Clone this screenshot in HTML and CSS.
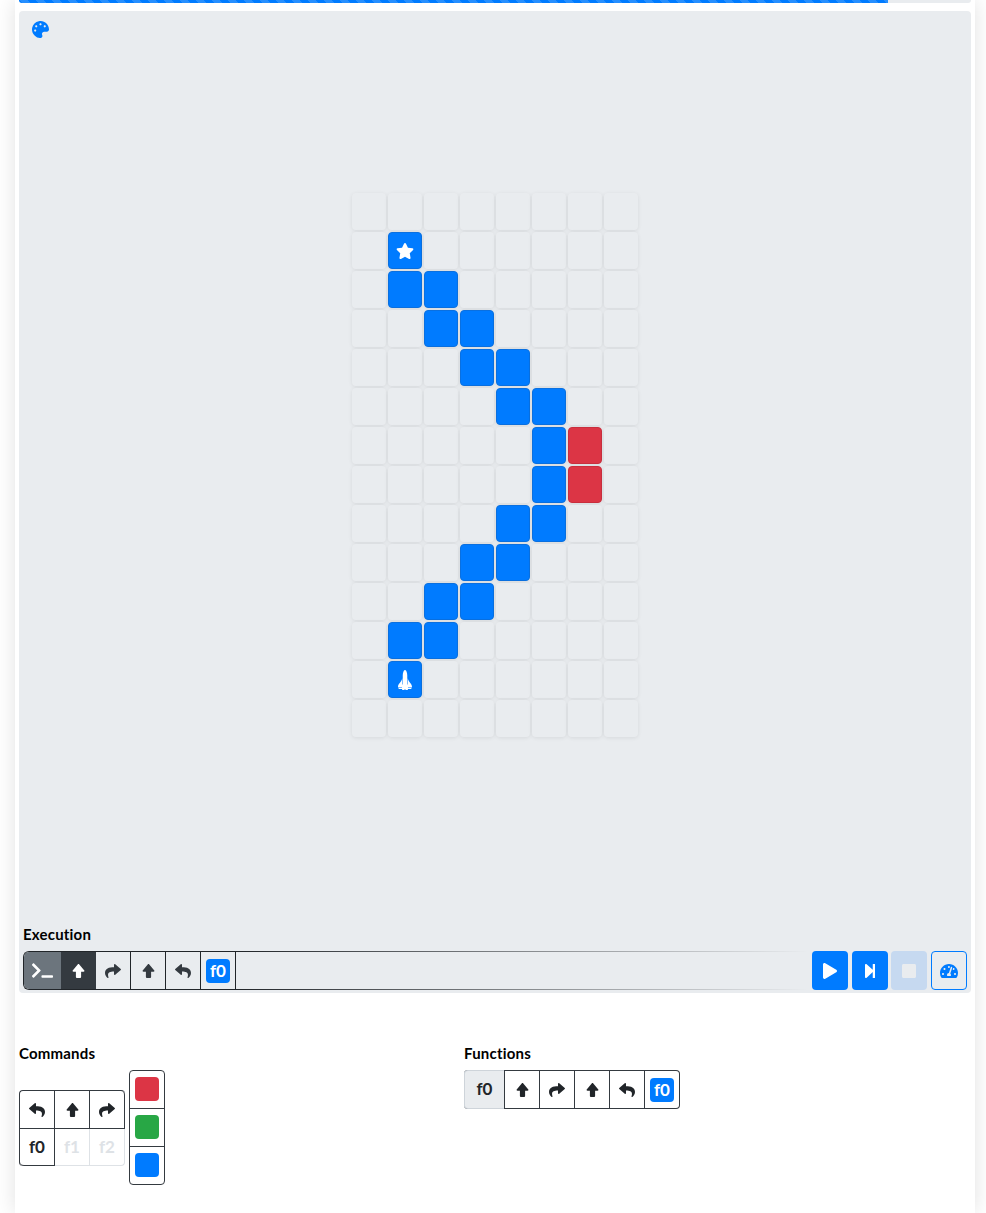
FILE: index.html
```html
<!DOCTYPE html>
<html lang="en">
<head>
    <meta charset="UTF-8">
    <meta name="viewport" content="width=device-width, initial-scale=1.0">
    <title>Robot Puzzle</title>
    <link rel="stylesheet" href="styles.css">
</head>
<body>
  <svg class="icon-defs" aria-hidden="true">
    <symbol id="i-palette" viewBox="0 0 512 512"><path d="M204.3 5C104.9 24.4 24.8 104.3 5.2 203.4c-37 187 131.7 326.4 258.8 306.7 41.2-6.4 61.4-54.6 42.5-91.7-23.1-45.4 9.9-98.4 60.9-98.4h79.7c35.8 0 64.8-29.6 64.9-65.3C511.5 97.1 368.1-26.9 204.3 5zM96 320c-17.7 0-32-14.3-32-32s14.3-32 32-32 32 14.3 32 32-14.3 32-32 32zm32-128c-17.7 0-32-14.3-32-32s14.3-32 32-32 32 14.3 32 32-14.3 32-32 32zm128-64c-17.7 0-32-14.3-32-32s14.3-32 32-32 32 14.3 32 32-14.3 32-32 32zm128 64c-17.7 0-32-14.3-32-32s14.3-32 32-32 32 14.3 32 32-14.3 32-32 32z"/></symbol>
    <symbol id="i-star" viewBox="0 0 576 512"><path d="M259.3 17.8L194 150.2 47.9 171.5c-26.2 3.8-36.7 36.1-17.7 54.6l105.7 103-25 145.5c-4.5 26.3 23.2 46 46.4 33.7L288 439.6l130.7 68.7c23.2 12.2 50.9-7.4 46.4-33.7l-25-145.5 105.7-103c19-18.5 8.5-50.8-17.7-54.6L382 150.2 316.7 17.8c-11.7-23.6-45.6-23.9-57.4 0z"/></symbol>
    <symbol id="i-shuttle" viewBox="0 0 640 640"><path transform="rotate(-90 320 320) translate(0 64)" d="M592.604 208.244C559.735 192.836 515.777 184 472 184H186.327c-4.952-6.555-10.585-11.978-16.72-16H376C229.157 137.747 219.403 32 96.003 32H96v128H80V32c-26.51 0-48 28.654-48 64v64c-23.197 0-32 10.032-32 24v40c0 13.983 8.819 24 32 24v16c-23.197 0-32 10.032-32 24v40c0 13.983 8.819 24 32 24v64c0 35.346 21.49 64 48 64V352h16v128h.003c123.4 0 133.154-105.747 279.997-136H169.606c6.135-4.022 11.768-9.445 16.72-16H472c43.777 0 87.735-8.836 120.604-24.244C622.282 289.845 640 271.992 640 256s-17.718-33.845-47.396-47.756z"/></symbol>
    <symbol id="i-up" viewBox="0 0 12 14"><path d="M5.2.4a1 1 0 0 1 1.6 0l5 6A.9.9 0 0 1 11 7.8H8.6V13a1 1 0 0 1-1 1H4.4a1 1 0 0 1-1-1V7.8H1A.9.9 0 0 1 .2 6.4z"/></symbol>
    <symbol id="i-right" viewBox="0 0 512 512"><path d="M503.691 189.836L327.687 37.851C312.281 24.546 288 35.347 288 56.015v80.053C127.371 137.907 0 170.1 0 322.326c0 61.441 39.581 122.309 83.333 154.132 13.653 9.931 33.111-2.533 28.077-18.631C66.066 312.814 132.917 274.316 288 272.085V360c0 20.7 24.3 31.453 39.687 18.164l176.004-152c11.071-9.562 11.086-26.753 0-36.328z"/></symbol>
    <symbol id="i-left" viewBox="0 0 512 512"><path transform="matrix(-1 0 0 1 512 0)" d="M503.691 189.836L327.687 37.851C312.281 24.546 288 35.347 288 56.015v80.053C127.371 137.907 0 170.1 0 322.326c0 61.441 39.581 122.309 83.333 154.132 13.653 9.931 33.111-2.533 28.077-18.631C66.066 312.814 132.917 274.316 288 272.085V360c0 20.7 24.3 31.453 39.687 18.164l176.004-152c11.071-9.562 11.086-26.753 0-36.328z"/></symbol>
    <symbol id="i-terminal" viewBox="0 0 640 512"><path d="M257.981 272.971L63.638 467.314c-9.373 9.373-24.569 9.373-33.941 0L7.029 444.647c-9.357-9.357-9.375-24.522-.04-33.901L161.011 256 6.99 101.255c-9.335-9.379-9.317-24.544.04-33.901l22.667-22.667c9.373-9.373 24.569-9.373 33.941 0L257.981 239.03c9.373 9.372 9.373 24.568 0 33.941zM640 456v-32c0-13.255-10.745-24-24-24H312c-13.255 0-24 10.745-24 24v32c0 13.255 10.745 24 24 24h304c13.255 0 24-10.745 24-24z"/></symbol>
    <symbol id="i-play" viewBox="0 0 448 512"><path d="M424.4 214.7L72.4 6.6C43.8-10.3 0 6.1 0 47.9V464c0 37.5 40.7 60.1 72.4 41.3l352-208c31.4-18.5 31.5-64.1 0-82.6z"/></symbol>
    <symbol id="i-step" viewBox="0 0 448 512"><path d="M384 44v424c0 6.6-5.4 12-12 12h-48c-6.6 0-12-5.4-12-12V291.6l-195.5 181C95.9 489.7 64 475.4 64 448V64c0-27.4 31.9-41.7 52.5-24.6L312 219.3V44c0-6.6 5.4-12 12-12h48c6.6 0 12 5.4 12 12z"/></symbol>
    <symbol id="i-stop" viewBox="0 0 448 512"><path d="M400 32H48C21.5 32 0 53.5 0 80v352c0 26.5 21.5 48 48 48h352c26.5 0 48-21.5 48-48V80c0-26.5-21.5-48-48-48z"/></symbol>
    <symbol id="i-gauge" viewBox="0 0 576 512"><path d="M288 32C128.94 32 0 160.94 0 320c0 52.8 14.25 102.26 39.06 144.8 5.61 9.62 16.3 15.2 27.44 15.2h443c11.14 0 21.83-5.58 27.44-15.2C561.75 422.26 576 372.8 576 320c0-159.06-128.94-288-288-288zm0 64c14.71 0 26.58 10.13 30.32 23.65-1.11 2.26-2.64 4.23-3.45 6.67l-9.22 27.67c-5.13 3.49-10.97 6.01-17.64 6.01-17.67 0-32-14.33-32-32S270.33 96 288 96zM96 384c-17.67 0-32-14.33-32-32s14.33-32 32-32 32 14.33 32 32-14.33 32-32 32zm48-160c-17.67 0-32-14.33-32-32s14.33-32 32-32 32 14.33 32 32-14.33 32-32 32zm246.77-72.41l-61.33 184C343.13 347.33 352 364.54 352 384c0 11.72-3.38 22.55-8.88 32H232.88c-5.5-9.45-8.88-20.28-8.88-32 0-33.94 26.5-61.43 59.9-63.59l61.34-184.01c4.17-12.56 17.73-19.45 30.36-15.17 12.57 4.19 19.35 17.79 15.17 30.36zm14.66 57.2l15.52-46.55c3.47-1.29 7.13-2.23 11.05-2.23 17.67 0 32 14.33 32 32s-14.33 32-32 32c-11.38-.01-20.89-6.28-26.57-15.22zM480 384c-17.67 0-32-14.33-32-32s14.33-32 32-32 32 14.33 32 32-14.33 32-32 32z"/></symbol>
  </svg>

  <div class="page">
    <div class="progress"><div class="progress-bar"></div></div>

    <div class="stage">
      <button class="theme-btn"><svg class="icon"><use href="#i-palette"/></svg></button>

      <div class="board">
        <div class="cell"></div><div class="cell"></div><div class="cell"></div><div class="cell"></div><div class="cell"></div><div class="cell"></div><div class="cell"></div><div class="cell"></div>
        <div class="cell"></div><div class="cell blue"><svg class="icon star"><use href="#i-star"/></svg></div><div class="cell"></div><div class="cell"></div><div class="cell"></div><div class="cell"></div><div class="cell"></div><div class="cell"></div>
        <div class="cell"></div><div class="cell blue"></div><div class="cell blue"></div><div class="cell"></div><div class="cell"></div><div class="cell"></div><div class="cell"></div><div class="cell"></div>
        <div class="cell"></div><div class="cell"></div><div class="cell blue"></div><div class="cell blue"></div><div class="cell"></div><div class="cell"></div><div class="cell"></div><div class="cell"></div>
        <div class="cell"></div><div class="cell"></div><div class="cell"></div><div class="cell blue"></div><div class="cell blue"></div><div class="cell"></div><div class="cell"></div><div class="cell"></div>
        <div class="cell"></div><div class="cell"></div><div class="cell"></div><div class="cell"></div><div class="cell blue"></div><div class="cell blue"></div><div class="cell"></div><div class="cell"></div>
        <div class="cell"></div><div class="cell"></div><div class="cell"></div><div class="cell"></div><div class="cell"></div><div class="cell blue"></div><div class="cell red"></div><div class="cell"></div>
        <div class="cell"></div><div class="cell"></div><div class="cell"></div><div class="cell"></div><div class="cell"></div><div class="cell blue"></div><div class="cell red"></div><div class="cell"></div>
        <div class="cell"></div><div class="cell"></div><div class="cell"></div><div class="cell"></div><div class="cell blue"></div><div class="cell blue"></div><div class="cell"></div><div class="cell"></div>
        <div class="cell"></div><div class="cell"></div><div class="cell"></div><div class="cell blue"></div><div class="cell blue"></div><div class="cell"></div><div class="cell"></div><div class="cell"></div>
        <div class="cell"></div><div class="cell"></div><div class="cell blue"></div><div class="cell blue"></div><div class="cell"></div><div class="cell"></div><div class="cell"></div><div class="cell"></div>
        <div class="cell"></div><div class="cell blue"></div><div class="cell blue"></div><div class="cell"></div><div class="cell"></div><div class="cell"></div><div class="cell"></div><div class="cell"></div>
        <div class="cell"></div><div class="cell blue"><svg class="icon shuttle"><use href="#i-shuttle"/></svg></div><div class="cell"></div><div class="cell"></div><div class="cell"></div><div class="cell"></div><div class="cell"></div><div class="cell"></div>
        <div class="cell"></div><div class="cell"></div><div class="cell"></div><div class="cell"></div><div class="cell"></div><div class="cell"></div><div class="cell"></div><div class="cell"></div>
      </div>

      <div class="execution">
        <h6 class="section-title">Execution</h6>
        <div class="exec-row">
          <div class="exec-track">
            <div class="exec-steps">
              <div class="exec-step exec-prompt"><svg class="icon terminal"><use href="#i-terminal"/></svg></div>
              <div class="exec-step exec-current"><svg class="icon arrow"><use href="#i-up"/></svg></div>
              <div class="exec-step"><svg class="icon"><use href="#i-right"/></svg></div>
              <div class="exec-step"><svg class="icon arrow"><use href="#i-up"/></svg></div>
              <div class="exec-step"><svg class="icon"><use href="#i-left"/></svg></div>
              <div class="exec-step"><span class="fn-chip">f0</span></div>
            </div>
            <div class="exec-rest"></div>
          </div>
          <div class="exec-controls">
            <button class="ctl-btn"><svg class="icon play"><use href="#i-play"/></svg></button>
            <button class="ctl-btn"><svg class="icon"><use href="#i-step"/></svg></button>
            <button class="ctl-btn ctl-disabled"><svg class="icon"><use href="#i-stop"/></svg></button>
            <button class="ctl-btn ctl-outline"><svg class="icon"><use href="#i-gauge"/></svg></button>
          </div>
        </div>
      </div>
    </div>

    <div class="editor">
      <div class="editor-col">
        <h6 class="section-title">Commands</h6>
        <div class="commands">
          <div class="cmd-grid">
            <button class="tool"><svg class="icon"><use href="#i-left"/></svg></button>
            <button class="tool"><svg class="icon arrow"><use href="#i-up"/></svg></button>
            <button class="tool tool-corner"><svg class="icon"><use href="#i-right"/></svg></button>
            <button class="tool">f0</button>
            <button class="tool tool-off">f1</button>
            <button class="tool tool-off">f2</button>
          </div>
          <div class="colors">
            <button class="tool"><span class="swatch red"></span></button>
            <button class="tool"><span class="swatch green"></span></button>
            <button class="tool"><span class="swatch blue"></span></button>
          </div>
        </div>
      </div>
      <div class="editor-col">
        <h6 class="section-title">Functions</h6>
        <div class="fn-row">
          <div class="fn-name">f0</div>
          <button class="tool"><svg class="icon arrow"><use href="#i-up"/></svg></button>
          <button class="tool"><svg class="icon"><use href="#i-right"/></svg></button>
          <button class="tool"><svg class="icon arrow"><use href="#i-up"/></svg></button>
          <button class="tool"><svg class="icon"><use href="#i-left"/></svg></button>
          <button class="tool"><span class="fn-chip">f0</span></button>
        </div>
      </div>
    </div>
  </div>
</body>
</html>
```

FILE: styles.css
```css
* {
  box-sizing: border-box;
}
body {
  margin: 0;
  background-color: #fff;
  font-family: "Lato", "Open Sans", sans-serif;
  color: #000;
  overflow: hidden;
}
button {
  font: inherit;
  padding: 0;
  background: none;
  border: none;
}
.icon-defs {
  display: none;
}
.icon {
  width: 16px;
  height: 16px;
  fill: currentColor;
  display: block;
}
.icon.arrow {
  width: 13px;
  height: 14px;
}

.page {
  width: 960px;
  min-height: 1213px;
  margin-left: 15px;
  padding: 0 4px;
  box-shadow: 0 0 20px rgba(0,0,0,0.12);
}

.progress {
  height: 3px;
  background-color: #e9ecef;
  border-radius: 0 0 3px 3px;
  overflow: hidden;
}
.progress-bar {
  width: 869px;
  height: 100%;
  background-color: #007bff;
  background-image: linear-gradient(45deg, rgba(255,255,255,.15) 25%, transparent 25%, transparent 50%, rgba(255,255,255,.15) 50%, rgba(255,255,255,.15) 75%, transparent 75%, transparent);
  background-size: 16px 16px;
}

.stage {
  height: 982px;
  margin-top: 8px;
  padding: 0 4px 3px;
  background-color: #e9ecef;
  border-radius: 4px;
  display: flex;
  flex-direction: column;
}
.theme-btn {
  width: 17px;
  height: 17px;
  margin: 10px 0 0 9px;
  color: #007bff;
  flex: none;
}
.theme-btn .icon {
  width: 17px;
  height: 17px;
}

.board {
  display: grid;
  grid-template-columns: repeat(8, 34px);
  grid-auto-rows: 37px;
  gap: 2px;
  justify-content: center;
  margin-top: 155px;
  flex: 1;
  align-content: start;
}
.cell {
  background-color: #e9ecef;
  border-radius: 4px;
  box-shadow: 0 1px 4px rgba(0,0,0,0.08);
  display: flex;
  align-items: center;
  justify-content: center;
  color: #fff;
}
.cell.blue {
  background-color: #007bff;
  border: 1px solid #0a70e0;
}
.cell.red {
  background-color: #dc3545;
  border: 1px solid #c92f3e;
}
.star {
  width: 18px;
  height: 18px;
}
.shuttle {
  width: 20px;
  height: 20px;
}

.section-title {
  margin: 0 0 8px;
  font-size: 15px;
  font-weight: 700;
  line-height: 18px;
  letter-spacing: 0.2px;
}

.exec-row {
  display: flex;
  justify-content: space-between;
}
.exec-track {
  flex: 1;
  height: 39px;
  display: flex;
  margin-right: 4px;
}
.exec-steps {
  display: flex;
  border: 1px solid #212529;
  border-right: none;
  border-radius: 6px 0 0 6px;
  overflow: hidden;
}
.exec-rest {
  flex: 1;
  background-image: linear-gradient(to right, #212529, transparent), linear-gradient(to right, #212529, transparent);
  background-size: 100% 1px;
  background-position: top, bottom;
  background-repeat: no-repeat;
}
.exec-step {
  width: 35px;
  height: 100%;
  border-right: 1px solid #212529;
  display: flex;
  align-items: center;
  justify-content: center;
  color: #343a40;
}
.exec-prompt {
  width: 37px;
  background-color: #6c757d;
  color: #fff;
  border-right: none;
}
.exec-prompt .terminal {
  width: 21px;
  height: 17px;
}
.exec-current {
  background-color: #343a40;
  color: #fff;
  border-right: none;
}
.fn-chip {
  width: 24px;
  height: 24px;
  background-color: #007bff;
  color: #fff;
  border-radius: 4px;
  display: flex;
  align-items: center;
  justify-content: center;
  font-size: 17px;
  font-weight: 700;
}
.exec-controls {
  display: flex;
  gap: 3.67px;
}
.ctl-btn {
  width: 36px;
  height: 39px;
  background-color: #007bff;
  color: #fff;
  border-radius: 4px;
  display: flex;
  align-items: center;
  justify-content: center;
}
.ctl-disabled {
  background-color: #c6d9f0;
  color: #e9ecef;
}
.ctl-outline {
  background: none;
  border: 1px solid #007bff;
  color: #007bff;
}
.ctl-outline .icon {
  width: 18px;
  height: 18px;
}

.editor {
  display: flex;
  margin-top: 51px;
}
.editor-col {
  width: 445px;
}
.commands {
  display: flex;
  align-items: flex-start;
  gap: 4px;
}
.tool {
  width: 35px;
  height: 38px;
  display: flex;
  align-items: center;
  justify-content: center;
  color: #212529;
  font-size: 17px;
  font-weight: 700;
  border-right: 1px solid #343a40;
  border-bottom: 1px solid #343a40;
}
.cmd-grid {
  display: grid;
  grid-template-columns: repeat(3, 35px);
  grid-template-rows: 38px 37px;
  margin-top: 20px;
  width: 106px;
  border-top: 1px solid #343a40;
  border-left: 1px solid #343a40;
  border-radius: 4px 4px 0 4px;
}
.cmd-grid .tool {
  height: auto;
}
.cmd-grid .tool:nth-child(n+4) {
  padding-bottom: 2px;
}
.cmd-grid .tool:nth-child(4) {
  border-bottom-left-radius: 4px;
}
.tool-corner {
  border-top-right-radius: 4px;
}
.tool-off {
  color: #dee2e6;
  border-right-color: #dee2e6;
  border-bottom-color: #dee2e6;
}
.tool-off:last-child {
  border-bottom-right-radius: 4px;
}
.colors {
  width: 36px;
  border: 1px solid #343a40;
  border-radius: 4px;
}
.colors .tool {
  width: 34px;
  padding-bottom: 1px;
  border-right: none;
}
.colors .tool:last-child {
  height: 37px;
  border-bottom: none;
}
.swatch {
  width: 24px;
  height: 24px;
  border-radius: 4px;
}
.swatch.red {
  background-color: #dc3545;
}
.swatch.green {
  background-color: #28a745;
}
.swatch.blue {
  background-color: #007bff;
}

.fn-row {
  display: inline-flex;
  height: 39px;
  border: 1px solid #343a40;
  border-left: none;
  border-radius: 4px;
}
.fn-row .tool {
  height: 37px;
  border-bottom: none;
}
.fn-row .tool:last-child {
  width: 34px;
  border-right: none;
}
.fn-name {
  width: 40px;
  margin: -1px 0;
  padding-bottom: 2px;
  background-color: #e9ecef;
  border: 1px solid #ced4da;
  border-right: none;
  border-radius: 4px 0 0 4px;
  display: flex;
  align-items: center;
  justify-content: center;
  font-size: 17px;
  font-weight: 700;
  color: #212529;
}
.fn-row .tool:nth-child(2) {
  border-left: 1px solid #343a40;
  width: 36px;
}
```
